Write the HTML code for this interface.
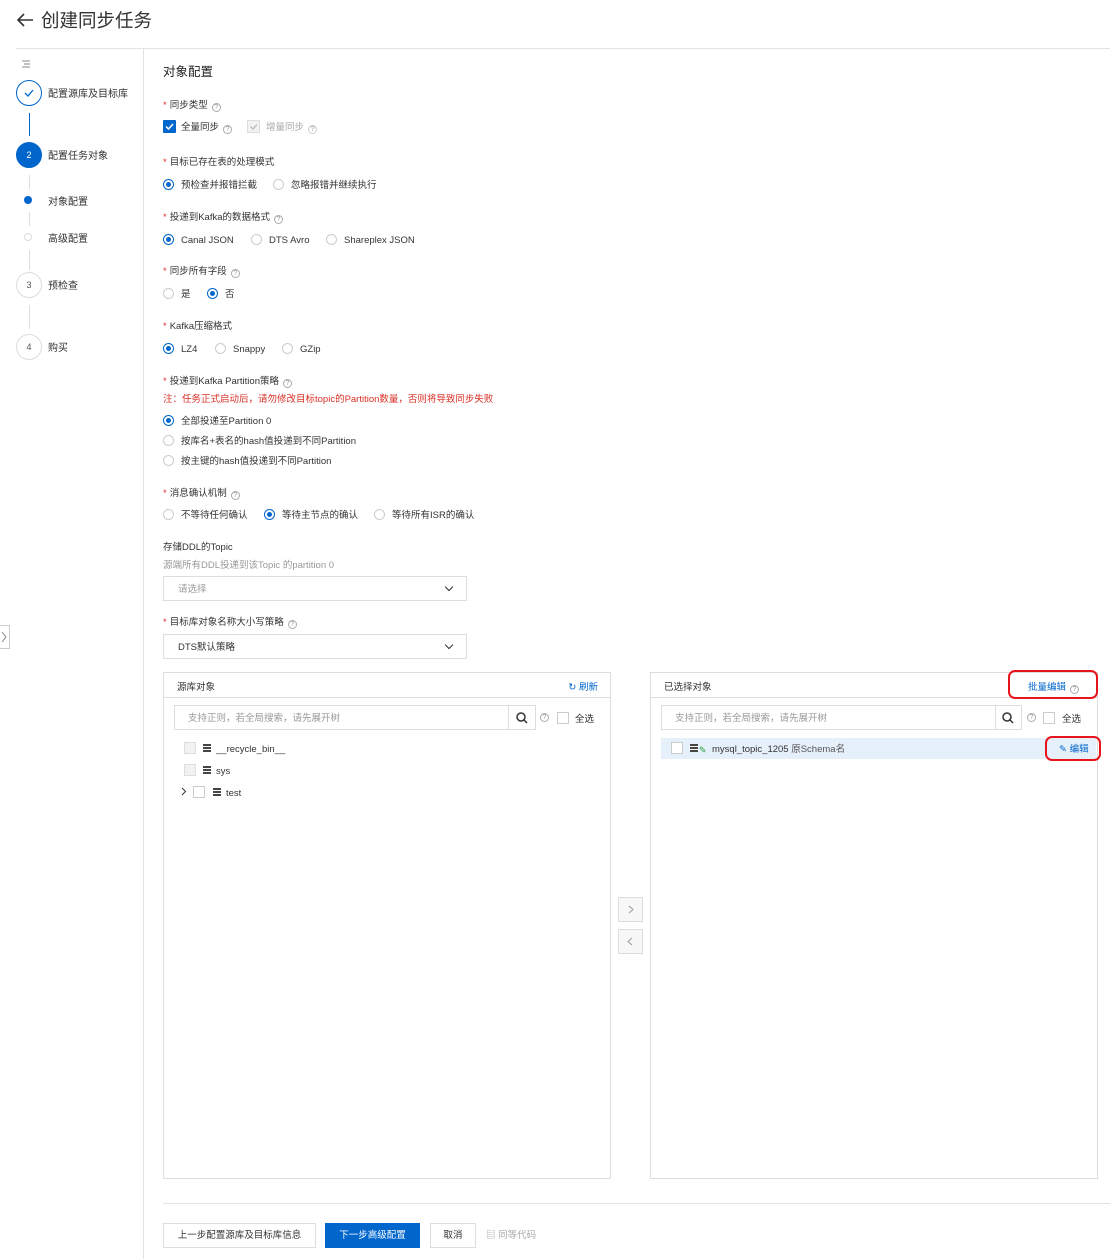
<!DOCTYPE html>
<html><head><meta charset="utf-8"><style>
*{box-sizing:border-box;margin:0;padding:0}
body{width:1110px;height:1259px;background:#fff;font-family:"Liberation Sans","Noto Sans CJK SC",sans-serif;color:#333;position:relative;overflow:hidden;font-size:9.5px}
.a{position:absolute;white-space:nowrap;line-height:14px;margin-top:2px}
.lbl{position:absolute;left:163px;white-space:nowrap;line-height:14px;font-size:9.5px;color:#333;margin-top:2px}
.lbl .s{color:#d93026;margin-right:3px}
.q{display:inline-block;width:9px;height:9px;border:1px solid #aaa;border-radius:50%;font-size:7px;line-height:7px;text-align:center;color:#999;margin-left:4px;vertical-align:-1px}
.r{position:absolute;width:11px;height:11px;border:1px solid #ccc;border-radius:50%;background:#fff}
.r.on{border-color:#0066cc}
.r.on:after{content:"";position:absolute;left:2px;top:2px;width:5px;height:5px;border-radius:50%;background:#0066cc}
.sel{position:absolute;left:163px;width:304px;height:25px;border:1px solid #ddd;background:#fff}
.sel span{position:absolute;left:14px;top:6px;line-height:14px}
.sel i{position:absolute;right:14px;top:7px;width:6px;height:6px;border-right:1.2px solid #333;border-bottom:1.2px solid #333;transform:rotate(45deg)}
.panel{position:absolute;top:672px;height:507px;border:1px solid #ddd;background:#fff}
.ph{height:25px;border-bottom:1px solid #ddd;position:relative}
.ph b{font-weight:normal;position:absolute;left:13px;top:8px;line-height:14px}
.srch{position:absolute;top:32px;height:25px;border:1px solid #ddd;}
.srch span{position:absolute;left:13px;top:6px;line-height:14px;color:#999}
.sb{position:absolute;top:32px;width:27px;height:25px;border:1px solid #ddd;border-left:none}
.cb{position:absolute;width:12px;height:12px;border:1px solid #ccc;background:#fff}
.cb.g{background:#f2f2f2;border-color:#ddd}
.db{position:absolute;width:8px;height:8px;background:repeating-linear-gradient(#444 0 2px,#fff 2px 3px)}
.step{position:absolute;left:16px;width:26px;height:26px;border-radius:50%;border:1px solid #ddd;text-align:center;line-height:24px;font-size:9px;color:#555;background:#fff}
.vl{position:absolute;left:29px;width:1px;background:#ddd}
.btn{position:absolute;top:1223px;height:25px;border:1px solid #ddd;background:#fff;text-align:center;line-height:23px;font-size:9.5px;color:#333}
</style></head><body>
<svg style="position:absolute;left:15px;top:11px" width="20" height="18" viewBox="0 0 20 18"><path d="M18 9H3M9 3L3 9l6 6" fill="none" stroke="#333" stroke-width="1.6"/></svg>
<div class="a" style="left:41px;top:7px;font-size:18.5px;line-height:24px;color:#333">创建同步任务</div>
<div style="position:absolute;left:16px;top:48px;width:1094px;height:1px;background:#e3e3e3"></div>
<div style="position:absolute;left:143px;top:48px;width:1px;height:1211px;background:#e3e3e3"></div>

<svg style="position:absolute;left:22px;top:60px" width="9" height="8"><path d="M0 1h8M2 4h6M0 7h8" stroke="#888" stroke-width="1"/></svg>
<div class="step" style="top:80px;border-color:#0066cc"><svg width="12" height="10" style="margin-top:7px" viewBox="0 0 12 10"><path d="M2 5l3 3 5-6" fill="none" stroke="#0066cc" stroke-width="1.3"/></svg></div>
<div class="a" style="left:48px;top:86px;font-size:10px">配置源库及目标库</div>
<div class="vl" style="top:113px;height:23px;background:#0066cc"></div>
<div class="step" style="top:142px;background:#0066cc;border-color:#0066cc;color:#fff">2</div>
<div class="a" style="left:48px;top:148px;font-size:10px">配置任务对象</div>
<div class="vl" style="top:175px;height:14px"></div>
<div style="position:absolute;left:24px;top:196px;width:8px;height:8px;border-radius:50%;background:#0066cc"></div>
<div class="a" style="left:48px;top:194px;font-size:10px">对象配置</div>
<div class="vl" style="top:212px;height:14px"></div>
<div style="position:absolute;left:24px;top:233px;width:8px;height:8px;border-radius:50%;border:1px solid #ddd"></div>
<div class="a" style="left:48px;top:231px;font-size:10px">高级配置</div>
<div class="vl" style="top:250px;height:20px"></div>
<div class="step" style="top:272px">3</div>
<div class="a" style="left:48px;top:278px;font-size:10px">预检查</div>
<div class="vl" style="top:305px;height:24px"></div>
<div class="step" style="top:334px">4</div>
<div class="a" style="left:48px;top:340px;font-size:10px">购买</div>
<div style="position:absolute;left:0;top:625px;width:10px;height:24px;border:1px solid #ccc;border-left:none;background:#fff"></div>
<svg style="position:absolute;left:1px;top:631px" width="6" height="12"><path d="M1 1l4 5-4 5" fill="none" stroke="#888" stroke-width="1"/></svg>

<div class="a" style="left:163px;top:62px;font-size:12.5px;line-height:16px;color:#222">对象配置</div>
<div class="lbl" style="top:97px"><span class="s">*</span>同步类型<span class="q">?</span></div>
<div style="position:absolute;left:163px;top:120px;width:13px;height:13px;background:#0066cc;border-radius:1px"><svg width="13" height="13"><path d="M3 6.5l2.5 2.5 4.5-5" fill="none" stroke="#fff" stroke-width="1.5"/></svg></div>
<div class="a" style="left:181px;top:119px">全量同步<span class="q">?</span></div>
<div style="position:absolute;left:247px;top:120px;width:13px;height:13px;background:#f2f2f2;border:1px solid #ddd"><svg width="11" height="11"><path d="M2.5 5.5l2.5 2.5 4-4.5" fill="none" stroke="#bbb" stroke-width="1.3"/></svg></div>
<div class="a" style="left:266px;top:119px;color:#aaa">增量同步<span class="q" style="border-color:#ccc">?</span></div>

<div class="lbl" style="top:154px"><span class="s">*</span>目标已存在表的处理模式</div>
<div class="r on" style="left:163px;top:179px"></div><div class="a" style="left:181px;top:177px">预检查并报错拦截</div>
<div class="r" style="left:273px;top:179px"></div><div class="a" style="left:291px;top:177px">忽略报错并继续执行</div>

<div class="lbl" style="top:209px"><span class="s">*</span>投递到Kafka的数据格式<span class="q">?</span></div>
<div class="r on" style="left:163px;top:234px"></div><div class="a" style="left:181px;top:232px">Canal JSON</div>
<div class="r" style="left:251px;top:234px"></div><div class="a" style="left:269px;top:232px">DTS Avro</div>
<div class="r" style="left:326px;top:234px"></div><div class="a" style="left:344px;top:232px">Shareplex JSON</div>

<div class="lbl" style="top:263px"><span class="s">*</span>同步所有字段<span class="q">?</span></div>
<div class="r" style="left:163px;top:288px"></div><div class="a" style="left:181px;top:286px">是</div>
<div class="r on" style="left:207px;top:288px"></div><div class="a" style="left:225px;top:286px">否</div>

<div class="lbl" style="top:318px"><span class="s">*</span>Kafka压缩格式</div>
<div class="r on" style="left:163px;top:343px"></div><div class="a" style="left:181px;top:341px">LZ4</div>
<div class="r" style="left:215px;top:343px"></div><div class="a" style="left:233px;top:341px">Snappy</div>
<div class="r" style="left:282px;top:343px"></div><div class="a" style="left:300px;top:341px">GZip</div>

<div class="lbl" style="top:373px"><span class="s">*</span>投递到Kafka Partition策略<span class="q">?</span></div>
<div class="a" style="left:163px;top:391px;color:#d93026">注：任务正式启动后，请勿修改目标topic的Partition数量，否则将导致同步失败</div>
<div class="r on" style="left:163px;top:415px"></div><div class="a" style="left:181px;top:413px">全部投递至Partition 0</div>
<div class="r" style="left:163px;top:435px"></div><div class="a" style="left:181px;top:433px">按库名+表名的hash值投递到不同Partition</div>
<div class="r" style="left:163px;top:455px"></div><div class="a" style="left:181px;top:453px">按主键的hash值投递到不同Partition</div>

<div class="lbl" style="top:485px"><span class="s">*</span>消息确认机制<span class="q">?</span></div>
<div class="r" style="left:163px;top:509px"></div><div class="a" style="left:181px;top:507px">不等待任何确认</div>
<div class="r on" style="left:264px;top:509px"></div><div class="a" style="left:282px;top:507px">等待主节点的确认</div>
<div class="r" style="left:374px;top:509px"></div><div class="a" style="left:392px;top:507px">等待所有ISR的确认</div>

<div class="lbl" style="top:539px">存储DDL的Topic</div>
<div class="a" style="left:163px;top:557px;color:#999">源端所有DDL投递到该Topic 的partition 0</div>
<div class="sel" style="top:576px"><span style="color:#999">请选择</span><i></i></div>
<div class="lbl" style="top:614px"><span class="s">*</span>目标库对象名称大小写策略<span class="q">?</span></div>
<div class="sel" style="top:634px"><span>DTS默认策略</span><i></i></div>

<div class="panel" style="left:163px;width:448px">
 <div class="ph"><b>源库对象</b><span class="a" style="right:12px;top:6px;color:#0066cc">↻ 刷新</span></div>
 <div class="srch" style="left:10px;width:335px"><span>支持正则，若全局搜索，请先展开树</span></div>
 <div class="sb" style="left:345px"><svg width="26" height="24"><circle cx="12" cy="11" r="4" fill="none" stroke="#333" stroke-width="1.5"/><path d="M15 14l3 3" stroke="#333" stroke-width="1.5"/></svg></div>
 <span class="q" style="position:absolute;left:372px;top:40px">?</span>
 <div class="cb" style="left:393px;top:39px"></div>
 <div class="a" style="left:411px;top:38px">全选</div>
 <div class="cb g" style="left:20px;top:69px"></div><div class="db" style="left:39px;top:71px"></div><div class="a" style="left:52px;top:68px">__recycle_bin__</div>
 <div class="cb g" style="left:20px;top:91px"></div><div class="db" style="left:39px;top:93px"></div><div class="a" style="left:52px;top:90px">sys</div>
 <svg style="position:absolute;left:17px;top:114px" width="6" height="9"><path d="M1 1l3.5 3.5L1 8" fill="none" stroke="#333" stroke-width="1"/></svg>
 <div class="cb" style="left:29px;top:113px"></div><div class="db" style="left:49px;top:115px"></div><div class="a" style="left:62px;top:112px">test</div>
</div>

<div style="position:absolute;left:618px;top:897px;width:25px;height:25px;border:1px solid #ddd;background:#f7f7f7"><svg width="23" height="23"><path d="M10 8l4 3.5-4 3.5" fill="none" stroke="#999" stroke-width="1"/></svg></div>
<div style="position:absolute;left:618px;top:929px;width:25px;height:25px;border:1px solid #ddd;background:#f7f7f7"><svg width="23" height="23"><path d="M13 8l-4 3.5 4 3.5" fill="none" stroke="#999" stroke-width="1"/></svg></div>

<div class="panel" style="left:650px;width:448px">
 <div class="ph"><b>已选择对象</b><span class="a" style="left:377px;top:6px;color:#0066cc">批量编辑<span class="q">?</span></span></div>
 <div class="srch" style="left:10px;width:335px"><span>支持正则，若全局搜索，请先展开树</span></div>
 <div class="sb" style="left:344px"><svg width="26" height="24"><circle cx="12" cy="11" r="4" fill="none" stroke="#333" stroke-width="1.5"/><path d="M15 14l3 3" stroke="#333" stroke-width="1.5"/></svg></div>
 <span class="q" style="position:absolute;left:372px;top:40px">?</span>
 <div class="cb" style="left:392px;top:39px"></div>
 <div class="a" style="left:411px;top:38px">全选</div>
 <div style="position:absolute;left:10px;top:65px;width:435px;height:21px;background:#e6f0fb"></div>
 <div class="cb" style="left:20px;top:69px"></div><div class="db" style="left:39px;top:71px"></div>
 <span class="a" style="left:48px;top:68px;color:#2a9d3c;font-size:9px">✎</span>
 <div class="a" style="left:61px;top:68px">mysql_topic_1205 <span style="color:#555">原Schema名</span></div>
 <div class="a" style="left:408px;top:68px;color:#0066cc">✎ 编辑</div>
</div>
<div style="position:absolute;left:1008px;top:670px;width:90px;height:29px;border:2.5px solid #e8141c;border-radius:7px"></div>
<div style="position:absolute;left:1045px;top:736px;width:56px;height:25px;border:2.5px solid #e8141c;border-radius:7px"></div>

<div style="position:absolute;left:163px;top:1203px;width:947px;height:1px;background:#e3e3e3"></div>
<div class="btn" style="left:163px;width:153px">上一步配置源库及目标库信息</div>
<div class="btn" style="left:325px;width:95px;background:#0066cc;border-color:#0066cc;color:#fff">下一步高级配置</div>
<div class="btn" style="left:430px;width:46px">取消</div>
<div class="a" style="left:486px;top:1227px;color:#aaa">▤ 同等代码</div>
</body></html>
